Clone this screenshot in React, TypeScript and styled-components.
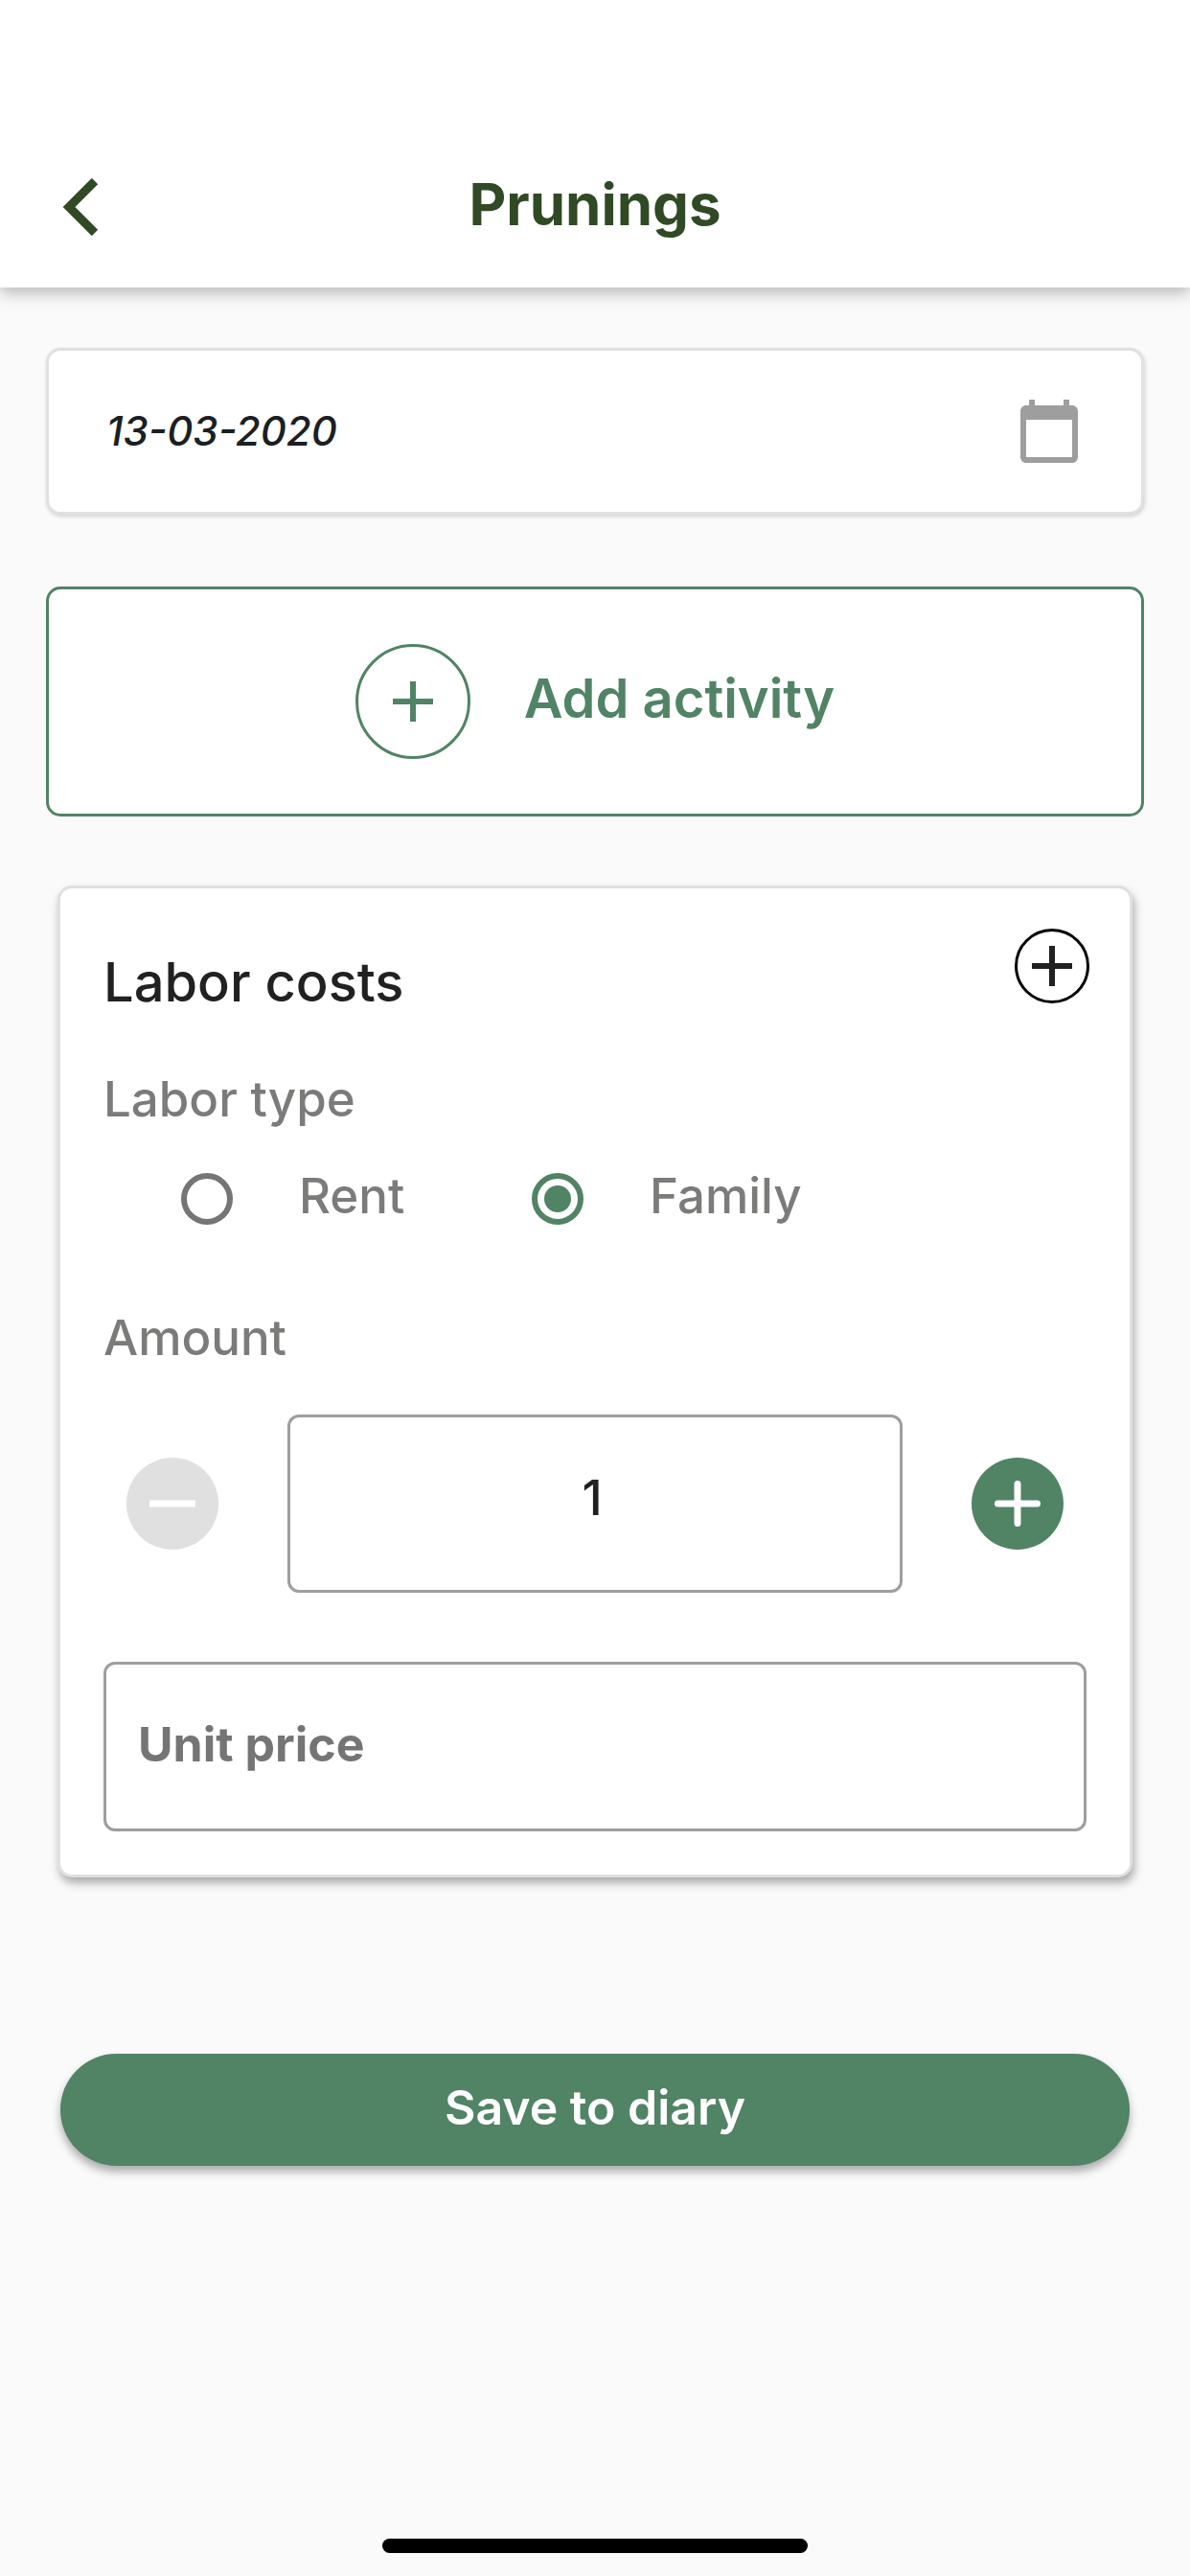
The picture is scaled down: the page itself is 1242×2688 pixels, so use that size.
import React, { useState } from "react";
import styled, { createGlobalStyle } from "styled-components";

const green = "#518365";
const darkGreen = "#304a25";
const ink = "#212121";
const muted = "#7b7c7a";
const outline = "#9e9e9e";

const GlobalStyle = createGlobalStyle`
  *, *::before, *::after { box-sizing: border-box; }
  body {
    margin: 0;
    background: #fafafa;
    font-family: Inter, "Liberation Sans", sans-serif;
  }
  button, input { font: inherit; margin: 0; }
  button { cursor: pointer; }
`;

const Page = styled.div`
  display: flex;
  flex-direction: column;
  min-height: 100vh;
  background: #fafafa;
`;

const Header = styled.header`
  display: grid;
  grid-template-columns: 180px 1fr 180px;
  align-items: center;
  height: 300px;
  padding-top: 132px;
  background: #ffffff;
  box-shadow: 0 6px 15px rgba(0, 0, 0, 0.26);
`;

const BackButton = styled.button`
  display: flex;
  justify-self: start;
  margin-left: 48px;
  padding: 0;
  border: 0;
  background: none;
`;

const Title = styled.h1`
  margin: 0;
  padding-bottom: 6px;
  color: ${darkGreen};
  font-size: 60px;
  font-weight: 700;
  line-height: 72px;
  text-align: center;
`;

const Content = styled.main`
  display: flex;
  flex-direction: column;
  flex: 1;
  padding: 63px 48px 24px;
`;

const DateField = styled.label`
  display: flex;
  align-items: center;
  height: 174px;
  padding: 0 60px;
  border: 3px solid #e0e0e0;
  border-radius: 15px;
  background: #ffffff;
  box-shadow: 1px 2px 4px rgba(0, 0, 0, 0.16);
`;

const DateInput = styled.input`
  flex: 1;
  min-width: 0;
  padding: 0;
  border: 0;
  outline: 0;
  background: none;
  color: #1a2023;
  font-size: 42px;
  font-style: italic;
  font-weight: 500;
  line-height: 60px;
`;

const AddActivity = styled.button`
  display: flex;
  align-items: center;
  justify-content: center;
  gap: 56px;
  height: 240px;
  margin-top: 75px;
  padding: 0;
  border: 3px solid ${green};
  border-radius: 15px;
  background: #ffffff;
  color: ${green};
`;

const AddLabel = styled.span`
  padding-bottom: 6px;
  font-size: 56px;
  font-weight: 600;
  line-height: 64px;
`;

const Ring = styled.span<{ $size: number }>`
  display: flex;
  align-items: center;
  justify-content: center;
  width: ${(p) => p.$size}px;
  height: ${(p) => p.$size}px;
  border: 3px solid currentColor;
  border-radius: 50%;
`;

const Card = styled.section`
  margin: 72px 12px 0;
  border: 3px solid #e0e0e0;
  border-radius: 15px;
  background: #ffffff;
  box-shadow: 2px 6px 10px rgba(0, 0, 0, 0.32);
`;

const CardHead = styled.div`
  display: flex;
  align-items: flex-start;
  justify-content: space-between;
  padding: 42px 42px 0 45px;
`;

const CardTitle = styled.h2`
  margin: 24px 0 0;
  color: ${ink};
  font-size: 56px;
  font-weight: 500;
  line-height: 64px;
`;

const AddCost = styled.button`
  padding: 0;
  border: 0;
  background: none;
  color: #000000;
`;

const CardBody = styled.div`
  padding: 60px 45px 45px;
`;

const Group = styled.fieldset`
  min-width: 0;
  margin: 0;
  padding: 0;
  border: 0;
`;

const Legend = styled.legend`
  padding: 0;
  color: ${muted};
  font-size: 51px;
  font-weight: 500;
  line-height: 60px;
`;

const Options = styled.div`
  display: flex;
  padding: 44px 0 0 81px;
`;

const Option = styled.label`
  display: flex;
  align-items: center;
  gap: 69px;
  min-width: 366px;
  height: 60px;
`;

const OptionText = styled.span`
  padding-bottom: 6px;
  color: ${muted};
  font-size: 51px;
  font-weight: 500;
  line-height: 60px;
`;

const Radio = styled.input`
  display: grid;
  place-content: center;
  width: 54px;
  height: 54px;
  appearance: none;
  border: 6px solid #757575;
  border-radius: 50%;
  background: #ffffff;

  &:checked { border-color: ${green}; }

  &:checked::before {
    content: "";
    width: 28px;
    height: 28px;
    border-radius: 50%;
    background: ${green};
  }
`;

const FieldLabel = styled.label`
  display: block;
  margin-top: 85px;
  color: ${muted};
  font-size: 51px;
  font-weight: 500;
  line-height: 60px;
`;

const Stepper = styled.div`
  display: flex;
  align-items: center;
  gap: 72px;
  margin-top: 50px;
  padding: 0 24px;
`;

const StepButton = styled.button`
  display: flex;
  flex: none;
  align-items: center;
  justify-content: center;
  width: 96px;
  height: 96px;
  padding: 0;
  border: 0;
  border-radius: 50%;
  background: ${green};
  color: #ffffff;

  &:disabled { background: #e0e0e0; }
`;

const AmountInput = styled.input`
  flex: 1;
  min-width: 0;
  height: 186px;
  padding: 0 6px 14px 0;
  border: 3px solid ${outline};
  border-radius: 12px;
  outline: 0;
  background: #ffffff;
  color: ${ink};
  font-size: 51px;
  font-weight: 500;
  text-align: center;
`;

const PriceInput = styled.input`
  display: block;
  width: 100%;
  height: 177px;
  margin-top: 72px;
  padding: 0 33px 6px;
  border: 3px solid ${outline};
  border-radius: 12px;
  outline: 0;
  background: #ffffff;
  color: ${ink};
  font-size: 50px;
  font-weight: 700;

  &::placeholder { color: #757575; opacity: 1; }
`;

const SaveButton = styled.button`
  height: 117px;
  margin: 184px 15px 0;
  padding: 0 0 6px;
  border: 0;
  border-radius: 59px;
  background: ${green};
  box-shadow: 0 6px 10px rgba(0, 0, 0, 0.32);
  color: #ffffff;
  font-size: 50px;
  font-weight: 600;
  line-height: 60px;
`;

const HomeBar = styled.div`
  align-self: center;
  width: 444px;
  height: 15px;
  margin-top: auto;
  border-radius: 8px;
  background: #000000;
`;

function ChevronIcon() {
  return (
    <svg width="72" height="60" viewBox="0 0 72 60" fill="none" aria-hidden="true">
      <path d="M51 3 L24 30 L51 57" stroke={darkGreen} strokeWidth="9" />
    </svg>
  );
}

function CalendarIcon() {
  return (
    <svg width="72" height="72" viewBox="0 0 24 24" aria-hidden="true">
      <path
        fill={outline}
        d="M20 3h-1V1h-2v2H7V1H5v2H4c-1.100 0-2 .9-2 2v16c0 1.100.9 2 2 2h16c1.100 0 2-.9 2-2V5c0-1.100-.9-2-2-2zm0 18H4V8h16v13z"
      />
    </svg>
  );
}

function PlusIcon({ color }: { color: string }) {
  return (
    <svg width="42" height="42" viewBox="0 0 42 42" aria-hidden="true">
      <path d="M21 0V42M0 21H42" stroke={color} strokeWidth="6" />
    </svg>
  );
}

function StepIcon({ plus }: { plus?: boolean }) {
  return (
    <svg width="48" height="48" viewBox="0 0 48 48" aria-hidden="true">
      <path
        d={plus ? "M24 3.500V44.500M3.500 24H44.500" : "M3 24H45"}
        stroke="currentColor"
        strokeWidth="7"
        strokeLinecap={plus ? "round" : "square"}
      />
    </svg>
  );
}

export default function App() {
  const [date, setDate] = useState("13-03-2020");
  const [laborType, setLaborType] = useState("Family");
  const [amount, setAmount] = useState(1);
  const [price, setPrice] = useState("");

  return (
    <>
      <GlobalStyle />
      <Page>
        <Header>
          <BackButton type="button" aria-label="Back">
            <ChevronIcon />
          </BackButton>
          <Title>Prunings</Title>
        </Header>
        <Content>
          <DateField>
            <DateInput aria-label="Date" value={date} onChange={(e) => setDate(e.target.value)} />
            <CalendarIcon />
          </DateField>

          <AddActivity type="button">
            <Ring $size={120}>
              <PlusIcon color={green} />
            </Ring>
            <AddLabel>Add activity</AddLabel>
          </AddActivity>

          <Card>
            <CardHead>
              <CardTitle>Labor costs</CardTitle>
              <AddCost type="button" aria-label="Add labor cost">
                <Ring $size={78}>
                  <PlusIcon color={ink} />
                </Ring>
              </AddCost>
            </CardHead>
            <CardBody>
              <Group>
                <Legend>Labor type</Legend>
                <Options>
                  {["Rent", "Family"].map((type) => (
                    <Option key={type}>
                      <Radio
                        type="radio"
                        name="labor-type"
                        checked={laborType === type}
                        onChange={() => setLaborType(type)}
                      />
                      <OptionText>{type}</OptionText>
                    </Option>
                  ))}
                </Options>
              </Group>

              <FieldLabel htmlFor="amount">Amount</FieldLabel>
              <Stepper>
                <StepButton
                  type="button"
                  aria-label="Decrease amount"
                  disabled={amount <= 1}
                  onClick={() => setAmount(amount - 1)}
                >
                  <StepIcon />
                </StepButton>
                <AmountInput
                  id="amount"
                  inputMode="numeric"
                  value={amount}
                  onChange={(e) => setAmount(Number(e.target.value) || 1)}
                />
                <StepButton type="button" aria-label="Increase amount" onClick={() => setAmount(amount + 1)}>
                  <StepIcon plus />
                </StepButton>
              </Stepper>

              <PriceInput
                aria-label="Unit price"
                placeholder="Unit price"
                value={price}
                onChange={(e) => setPrice(e.target.value)}
              />
            </CardBody>
          </Card>

          <SaveButton type="button">Save to diary</SaveButton>
          <HomeBar />
        </Content>
      </Page>
    </>
  );
}
